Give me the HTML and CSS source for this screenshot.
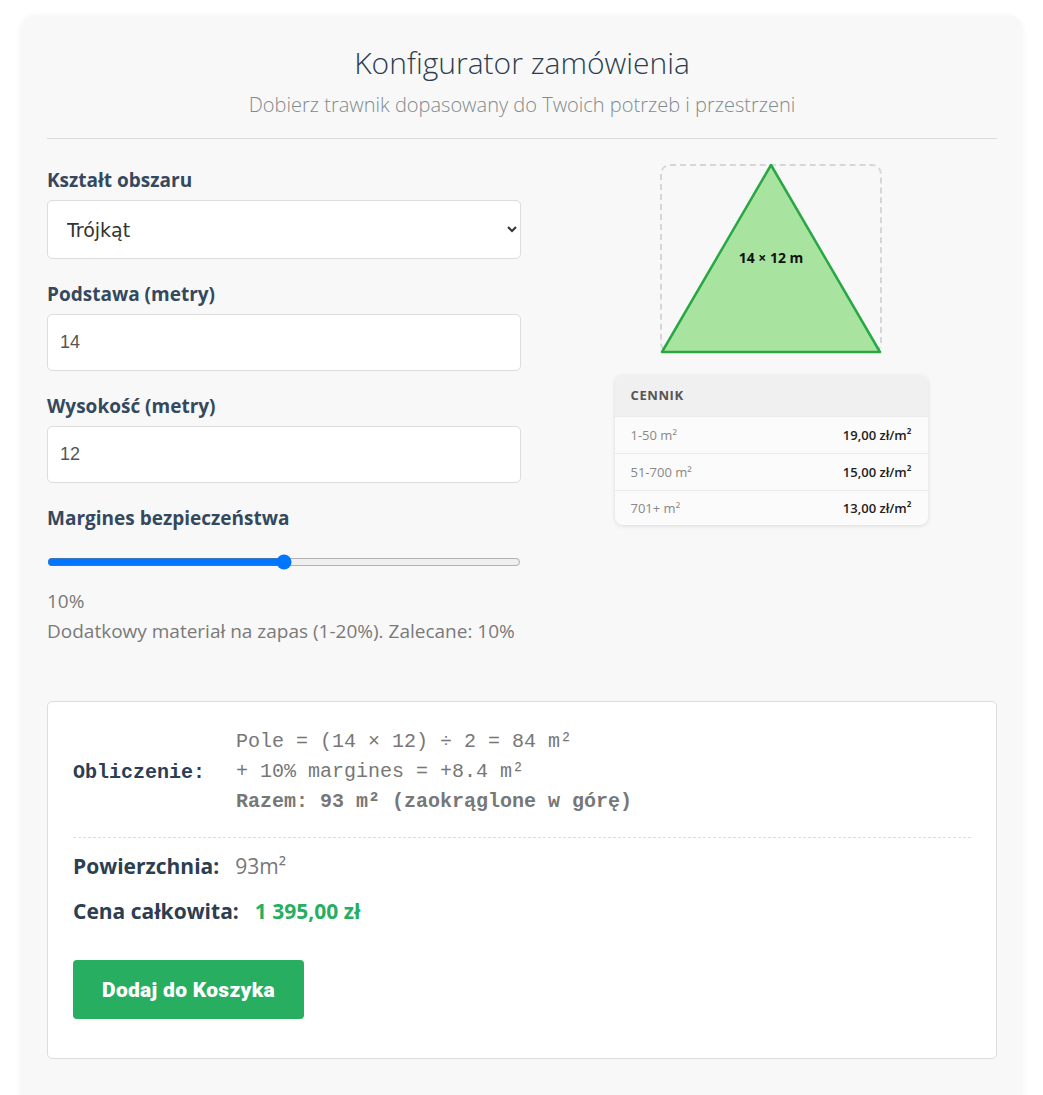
FILE: index.html
```html
<!doctype html>
<html lang="pl">

<head>
	<meta charset="UTF-8" />
	<meta name="viewport" content="width=device-width, initial-scale=1.0" />
	<title>Konfigurator zamówienia</title>
	<link rel="stylesheet" href="styles.css">
</head>

<body>
	<div class="configurator">
		<header class="config-header">
			<h1>Konfigurator zamówienia</h1>
			<p class="subtitle">Dobierz trawnik dopasowany do Twoich potrzeb i przestrzeni</p>
		</header>

		<div class="config-grid">
			<form class="config-form">
				<div class="field">
					<label for="shape">Kształt obszaru</label>
					<select id="shape" name="shape">
						<option>Prostokąt</option>
						<option selected>Trójkąt</option>
						<option>Koło</option>
					</select>
				</div>

				<div class="field">
					<label for="base">Podstawa (metry)</label>
					<input type="number" id="base" name="base" value="14" />
				</div>

				<div class="field">
					<label for="height">Wysokość (metry)</label>
					<input type="number" id="height" name="height" value="12" />
				</div>

				<div class="field">
					<label for="margin">Margines bezpieczeństwa</label>
					<input type="range" id="margin" name="margin" min="0" max="20" value="10" class="range" />
					<div class="hint">10%</div>
					<div class="hint">Dodatkowy materiał na zapas (1-20%). Zalecane: 10%</div>
				</div>
			</form>

			<aside class="preview">
				<div class="shape-box">
					<svg width="222" height="190" viewBox="0 0 222 190">
						<polygon points="111,1 2,188 220,188" fill="#a8e4a0" stroke="#28a745" stroke-width="2.5" stroke-linejoin="round" />
						<text x="111" y="99" text-anchor="middle" class="shape-label">14 × 12 m</text>
					</svg>
				</div>

				<div class="pricing">
					<div class="pricing-head">CENNIK</div>
					<div class="pricing-row"><span>1-50 m²</span><strong>19,00 zł/m²</strong></div>
					<div class="pricing-row"><span>51-700 m²</span><strong>15,00 zł/m²</strong></div>
					<div class="pricing-row"><span>701+ m²</span><strong>13,00 zł/m²</strong></div>
				</div>
			</aside>
		</div>

		<section class="result">
			<div class="calc">
				<div class="calc-label">Obliczenie:</div>
				<div class="calc-lines">
					<div>Pole = (14 × 12) ÷ 2 = 84 m²</div>
					<div>+ 10% margines = +8.4 m²</div>
					<div class="calc-total">Razem: 93 m² (zaokrąglone w górę)</div>
				</div>
			</div>

			<div class="summary-row">
				<span class="summary-label">Powierzchnia:</span>
				<span class="summary-value">93m²</span>
			</div>
			<div class="summary-row">
				<span class="summary-label">Cena całkowita:</span>
				<span class="summary-price">1 395,00 zł</span>
			</div>

			<button type="button" class="add-btn">Dodaj do Koszyka</button>
		</section>
	</div>
</body>

</html>
```

FILE: styles.css
```css
body {
	font-family: "Open Sans", "Noto Sans", sans-serif;
	margin: 0;
	padding: 15px 20px 0;
	background: #fff;
	color: #2c3e50;
}

.configurator {
	background: #f8f8f8;
	border-radius: 16px;
	box-shadow: 0 0 6px rgba(0, 0, 0, 0.04);
	padding: 27px 26px 80px 27px;
}

.config-header {
	text-align: center;
	padding-bottom: 20px;
	border-bottom: 1px solid #dcdcdc;
}

.config-header h1 {
	margin: 0;
	font-size: 30px;
	font-weight: 300;
	line-height: 42px;
	color: #2c3e50;
}

.subtitle {
	margin: 7px 0 0;
	font-size: 20px;
	font-weight: 300;
	line-height: 27px;
	color: #7f8c8d;
}

.config-grid {
	display: grid;
	grid-template-columns: 474px 1fr;
	gap: 24px;
	padding-top: 28px;
}

.field {
	margin-bottom: 22px;
}

.field label {
	display: block;
	font-size: 19px;
	font-weight: 700;
	line-height: 26px;
	color: #34495e;
	margin-bottom: 7px;
}

.field select,
.field input[type="number"] {
	width: 100%;
	box-sizing: border-box;
	background: #fff;
	border: 1px solid #ddd;
	border-radius: 5px;
	font-size: 18px;
	color: #333;
}

.field select {
	height: 59px;
	padding: 0 8px 0 15px;
	font-family: "DejaVu Sans", sans-serif;
	font-size: 19px;
}

.field input[type="number"] {
	height: 57px;
	padding: 0 12px;
	font-family: "Liberation Sans", Arial, sans-serif;
	color: #555;
	-moz-appearance: textfield;
}

.field input[type="number"]::-webkit-inner-spin-button,
.field input[type="number"]::-webkit-outer-spin-button {
	-webkit-appearance: none;
	margin: 0;
}

.range {
	width: 100%;
	margin: 16px 0 16px;
	accent-color: #0075ff;
}

.hint {
	font-size: 19px;
	color: #7a7a7a;
	line-height: 30px;
}

.preview {
	display: flex;
	flex-direction: column;
	align-items: center;
}

.shape-box {
	width: 222px;
	height: 189px;
	margin-top: -3px;
	border: 2px dashed #d6d6d6;
	border-radius: 10px;
	box-sizing: border-box;
	position: relative;
}

.shape-box svg {
	position: absolute;
	left: -2px;
	top: -2px;
}

.shape-label {
	font-family: "Open Sans", sans-serif;
	font-size: 14px;
	font-weight: 700;
	fill: #111;
}

.pricing {
	width: 313px;
	margin-top: 22px;
	background: #fbfbfb;
	border-radius: 8px;
	box-shadow: 0 1px 4px rgba(0, 0, 0, 0.12);
	overflow: hidden;
}

.pricing-head {
	background: #f0f0f0;
	padding: 0 16px;
	height: 41px;
	line-height: 41px;
	font-size: 13px;
	font-weight: 700;
	letter-spacing: 0.6px;
	color: #555;
}

.pricing-row {
	display: flex;
	justify-content: space-between;
	align-items: center;
	height: 36px;
	padding: 0 16px;
	border-top: 1px solid #ebebeb;
	font-size: 13px;
}

.pricing-row:last-child {
	height: 34px;
}

.pricing-row span {
	color: #888;
}

.pricing-row strong {
	color: #222;
	font-weight: 600;
}

.result {
	margin-top: 33px;
	background: #fff;
	border: 1px solid #ddd;
	border-radius: 5px;
	padding: 25px 25px 39px;
}

.calc {
	display: flex;
	align-items: center;
	font-family: "Liberation Mono", "Courier New", monospace;
	font-size: 20px;
	padding-bottom: 20px;
	border-bottom: 1px dashed #ddd;
}

.calc-label {
	width: 163px;
	font-weight: 700;
	color: #2c3e50;
}

.calc-lines {
	line-height: 30px;
	color: #777;
}

.calc-total {
	font-weight: 700;
}

.summary-row {
	display: flex;
	align-items: baseline;
	gap: 16px;
	font-size: 21px;
	margin-top: 12px;
	line-height: 33px;
}

.summary-label {
	font-weight: 700;
	color: #2c3e50;
}

.summary-value {
	color: #777;
}

.summary-price {
	color: #27ae60;
	font-weight: 700;
}

.add-btn {
	display: block;
	margin-top: 32px;
	width: 231px;
	height: 59px;
	background-color: #27ae60;
	color: #fff;
	border: none;
	border-radius: 4px;
	font-family: "Roboto", sans-serif;
	font-size: 21px;
	font-weight: 900;
	letter-spacing: 0.3px;
	cursor: pointer;
}

.add-btn:hover {
	background-color: #229954;
}
```
